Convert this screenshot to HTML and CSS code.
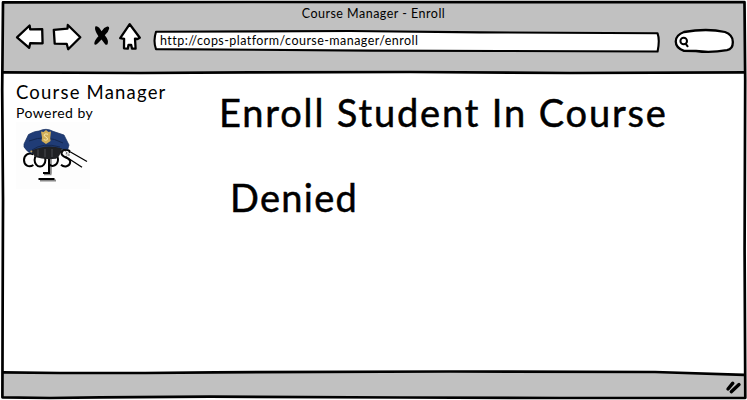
FILE: index.html
```html
<!DOCTYPE html>
<html lang="en">
<head>
<meta charset="utf-8">
<title>Course Manager - Enroll</title>
<link rel="stylesheet" href="styles.css">
</head>
<body>
<div class="window">
  <svg class="frame" viewBox="0 0 747 400" aria-hidden="true">
    <path class="chrome" d="M3 2H744L745 72.5L3 72.5Z"/>
    <path class="chrome" d="M2 372.5Q50 373 110 373Q190 373 215 372.3L450 371.5L660 372L744 374.8L745 397.7L2 397.5Z"/>
    <path class="line" d="M3 2.4L250 2L744.5 2.2L745.2 80L744.6 250L745.3 397.8L560 398L400 397.5L210 396.7L100 397.3L50 398L2.4 397.3L2.6 320L3 200L2.2 90Z"/>
    <path class="line" d="M3 72.3L140 73L250 72.4L410 72L570 73L745 72.4M3 372.3L60 373L145 373L215 372.3L450 371.5L655 372L744 374.8"/>
  </svg>
  <header class="toolbar">
    <div class="title"><span>Course Manager - Enroll</span></div>
    <div class="controls">
      <svg class="nav" viewBox="14 20 130 34" aria-hidden="true">
        <path class="shape" d="M17 37.4L29.6 25.5L30.2 29.3L42.2 29.1L42.6 43.4L30.2 43.2L29.2 47.8Z"/>
        <path class="shape" d="M53.8 29.8L67.5 28.6L67.8 25L80.3 37.2L68.2 49.2L66.7 43.8L54.7 43.6Z"/>
        <path class="shape" d="M129.7 24.2L139.8 37.8L137.5 39L135 38.7L135.6 48.5L132 48.6L131.2 45L128.5 45L127.8 48.7L124 48.3L124.1 38.8L120.2 38.2Z"/>
        <path class="solid" d="M95.2 26.5Q97 25.4 99.2 27.8L101.6 31.3Q104 27.3 107.2 26.6Q109.4 26.3 109.2 28.4Q108.7 31.5 104.8 35.2Q108.7 40 107.8 43.3Q107.5 45.5 105.3 44.5L101.5 39.5L97.6 43.5Q94.6 46 94.3 43.5Q94.3 40.5 98.4 36.2Q94.3 30.4 95.2 26.5Z"/>
      </svg>
      <div class="address">
        <svg viewBox="153 29 508 26" aria-hidden="true"><path class="shape thin" d="M156 31.7L350 31L480 32.4L657.5 33.2Q660 40 657.6 51.5L500 51L370 50.6L156 49.1Q153 41 156 31.7Z"/></svg>
        <span>http://cops-platform/course-manager/enroll</span>
      </div>
      <svg class="search" viewBox="673 27 62 27" aria-hidden="true">
        <path class="shape" d="M684 32Q707 28 725 32Q733 35 732.8 42Q733 49 727 50.2Q710 53 696 51L684 50.8C673 47 673 36 684 32Z"/>
        <circle class="lens" cx="683.7" cy="41" r="3.3"/><path class="lens" d="M685.8 43.8L687.6 46.3"/>
      </svg>
    </div>
  </header>
  <main class="page">
    <aside class="brand">
      <div class="product"><span>Course Manager</span></div>
      <div class="powered"><span>Powered by</span></div>
      <svg class="logo" viewBox="16 122 76 68" role="img" aria-label="cops">
        <rect x="16" y="122" width="74" height="67" fill="#fdfdfd"/>
        <path class="shade" d="M50.8 156V173.8M44 174.3H51.5M40 180.4H56"/>
        <g class="letters">
          <path d="M33.3 154.5C29 152 24 155 24 160C24 165.5 29 168 33.4 165"/>
          <ellipse cx="40" cy="160" rx="5.4" ry="6.5"/>
          <path d="M49 154V173M43 173H50M38.5 179H54.5M49 156C51 152.5 57.5 153 58 159C58.3 165 52 168 49 164"/>
          <path d="M70 151C66.5 148.5 62 149.7 61.5 153C61.2 158 70.7 157 70.2 162C69.8 167 64 167.4 61 164.7"/>
        </g>
        <path class="baton" d="M67 150L87 161.5M65.5 156.5L82 167.3"/>
        <path d="M24 144L28.5 134.5Q35 130.8 39 131Q46 127.5 53 131.3L64 135L69 145L67.8 149.2Q61 149.8 54 147.8Q42 146 32 153.5Q27 152 24 147Z" fill="#203c76" stroke="#183160" stroke-width=".7"/>
        <path d="M29 141Q46 134 63 143M32 150Q43 142 60 147" fill="none" stroke="#132851" stroke-width="1"/>
        <path d="M31 151Q46 143.5 62 148.5Q60.5 156 56 158.8Q44 160 35 157Z" fill="#202124"/>
        <path d="M38 149.5V156M45 149V157M52 149V157" stroke="#35363a" stroke-width="2"/>
        <path d="M41 131.5L43.5 132L46 130L48.5 132L51 131.5L50.2 138L50.6 141L46 144L41.6 141L42 137.5Z" fill="#d2ae59"/>
        <path d="M48 134.3Q43.7 133 44.3 136Q48.5 138 47.5 139.5Q46 141 43.7 139.5" fill="none" stroke="#f6e7ac"/>
        <circle cx="31.3" cy="151.5" r="1" fill="#c8a75a"/>
        <path d="M61 153Q62 149 66.5 150.5" fill="none" stroke="#111" stroke-width="2"/>
        <circle cx="67.5" cy="154" r="2.2" fill="#d0d0d0"/>
        <path d="M66 153h1M68.5 155h1M69 152.5h1" stroke="#222"/>
      </svg>
    </aside>
    <section class="content">
      <h1><span>Enroll Student In Course</span></h1>
      <p><span>Denied</span></p>
    </section>
  </main>
  <footer class="status">
    <svg class="grip" viewBox="724 379 18 17" aria-hidden="true"><path d="M728 389L732.8 383.2M731.3 391.7L739 384.6"/></svg>
  </footer>
</div>
</body>
</html>
```

FILE: styles.css
```css
body {
  margin: 0;
  background: #fff;
  color: #000;
  font-family: Lato, "Open Sans", sans-serif;
}
.window {
  position: relative;
  box-sizing: border-box;
  width: 747px;
  height: 400px;
  overflow: hidden;
  display: grid;
  grid-template-rows: 74px 299px 27px;
}
.frame {
  position: absolute;
  inset: 0;
  width: 747px;
  height: 400px;
}
.chrome { fill: #c1c1c1; }
.line { fill: none; stroke: #000; stroke-width: 2.7; stroke-linejoin: round; }
.shape { fill: #fff; stroke: #000; stroke-width: 2.3; stroke-linejoin: round; }
.thin { stroke-width: 2.1; }
.solid { fill: #000; }
.toolbar, .page, .status { position: relative; }
.title {
  height: 20px;
  padding-top: 5px;
  box-sizing: border-box;
  text-align: center;
  font-size: 12.5px;
  line-height: 17px;
  letter-spacing: .48px;
}
.controls { display: flex; align-items: flex-start; height: 34px; padding-left: 14px; }
.nav { width: 130px; height: 34px; flex: none; }
.address { position: relative; width: 508px; height: 26px; margin: 9px 0 0 9px; flex: none; }
.address svg { position: absolute; inset: 0; width: 508px; height: 26px; }
.address span {
  position: relative;
  display: block;
  padding: 3px 0 0 7px;
  font-size: 12.5px;
  line-height: 17px;
  letter-spacing: .45px;
}
.search { width: 62px; height: 27px; margin: 7px 0 0 12px; flex: none; }
.lens { fill: none; stroke: #000; stroke-width: 2; stroke-linecap: round; }
.page { display: grid; grid-template-columns: 204px 1fr; }
.brand { padding: 7px 0 0 16px; display: flex; flex-direction: column; }
.product { font-size: 18.5px; line-height: 22px; letter-spacing: 1.2px; white-space: nowrap; }
.powered { margin-top: 1px; font-size: 14px; line-height: 18px; letter-spacing: .45px; }
.logo { width: 76px; height: 68px; }
.letters { fill: none; stroke: #000; stroke-width: 2; }
.shade { fill: none; stroke: #888; stroke-width: 2; }
.baton { fill: none; stroke: #000; stroke-width: 1.3; }
.content { padding: 13px 0 0 15px; }
.content h1, .content p {
  margin: 0;
  font-size: 38px;
  line-height: 50px;
  font-weight: 400;
  letter-spacing: 1.85px;
  -webkit-text-stroke: .5px #000;
  white-space: nowrap;
}
.content p { margin: 35px 0 0 11px; letter-spacing: 1.3px; }
.status { display: flex; justify-content: flex-end; padding: 6px 5px 0 0; }
.grip { width: 18px; height: 17px; }
.grip path { fill: none; stroke: #000; stroke-width: 3.4; stroke-linecap: round; }
```
